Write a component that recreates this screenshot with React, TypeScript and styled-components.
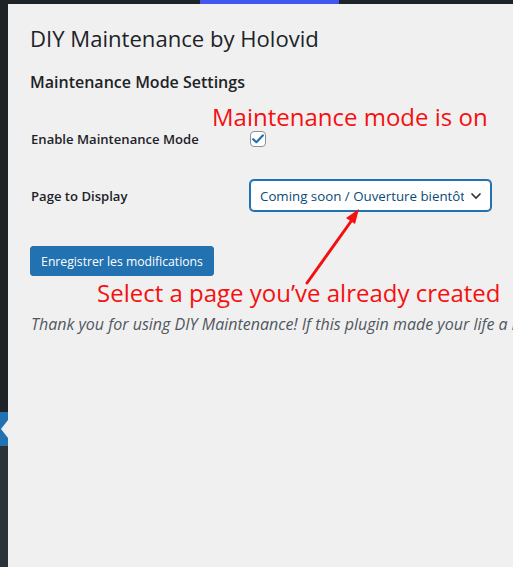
import React from "react";
import styled, { createGlobalStyle } from "styled-components";

const GlobalStyle = createGlobalStyle`
  html, body { margin: 0; padding: 0; background: #f0f0f1; overflow: hidden; }
  body { font-family: "Open Sans", "Noto Sans", sans-serif; color: #1d2327; }
  * { box-sizing: border-box; }
`;

const Page = styled.div`
  display: flex;
  width: 513px;
  height: 567px;
  overflow: hidden;
`;

const Sidebar = styled.div`
  width: 8px;
  flex: 0 0 8px;
  display: flex;
  flex-direction: column;
`;

const SideTop = styled.div`
  height: 412px;
  background: #1d2327;
`;

const SideActive = styled.div`
  height: 34px;
  background: #2271b1;
  display: flex;
  align-items: center;
  justify-content: flex-end;
`;

const Notch = styled.span`
  width: 0;
  height: 0;
  border-top: 9px solid transparent;
  border-bottom: 9px solid transparent;
  border-right: 7px solid #f0f0f1;
`;

const SideRest = styled.div`
  flex: 1;
  background: #2c3338;
`;

const Main = styled.div`
  flex: 1;
  display: flex;
  flex-direction: column;
  min-width: 0;
`;

const TopBar = styled.div`
  height: 4px;
  background: #1d2327;
  display: flex;
`;

const TopBarActive = styled.span`
  margin-left: 192px;
  width: 139px;
  background: #4058f0;
`;

const Content = styled.div`
  position: relative;
  flex: 1;
  padding: 19px 0 0 22px;
  overflow: hidden;
`;

const Title = styled.h1`
  margin: 0;
  font-size: 22.1px;
  line-height: 30px;
  font-weight: 400;
  color: #1d2327;
`;

const SectionTitle = styled.h2`
  margin: 17px 0 0;
  font-size: 16px;
  line-height: 24px;
  font-weight: 600;
  color: #1d2327;
`;

const FormTable = styled.div`
  display: flex;
  flex-direction: column;
  margin-top: 25px;
`;

const Row = styled.div<{ $h: number }>`
  display: flex;
  align-items: center;
  height: ${(p) => p.$h}px;
`;

const Label = styled.div`
  width: 220px;
  flex: 0 0 220px;
  font-size: 13.1px;
  font-weight: 600;
  color: #1d2327;
  padding-left: 1px;
`;

const Check = styled.span`
  width: 16px;
  height: 16px;
  border: 1px solid #8c8f94;
  border-radius: 4px;
  background: #fff;
  display: flex;
  align-items: center;
  justify-content: center;
`;

const Select = styled.div`
  width: 241px;
  height: 31px;
  margin-top: -1px;
  border: 1px solid #2271b1;
  box-shadow: 0 0 0 1px #2271b1;
  border-radius: 4px;
  background: #fff;
  display: flex;
  align-items: center;
  gap: 6px;
  padding: 0 8px 0 9px;
  font-size: 13.3px;
  color: #0a4b78;
  white-space: nowrap;
`;

const SelectValue = styled.span`
  flex: 1;
  overflow: hidden;
`;

const Button = styled.button`
  margin-top: 13px;
  width: 184px;
  height: 30px;
  border: 1px solid #2271b1;
  border-radius: 3px;
  background: #2271b1;
  color: #fff;
  font-family: "Open Sans", "Noto Sans", sans-serif;
  font-size: 12.2px;
  padding: 0;
  align-self: flex-start;
`;

const Footer = styled.p`
  margin: 37px 0 0 1px;
  font-size: 16px;
  line-height: 22px;
  font-style: italic;
  color: #50575e;
  white-space: nowrap;
`;

const Note = styled.div<{ $x: number; $y: number; $size: number }>`
  position: absolute;
  left: ${(p) => p.$x}px;
  top: ${(p) => p.$y}px;
  font-size: ${(p) => p.$size}px;
  line-height: 1;
  color: #f51010;
  white-space: nowrap;
`;

const Arrow = styled.svg`
  position: absolute;
  left: 0;
  top: 0;
  overflow: visible;
`;

export default function App() {
  return (
    <>
      <GlobalStyle />
      <Page>
        <Sidebar>
          <SideTop />
          <SideActive>
            <Notch />
          </SideActive>
          <SideRest />
        </Sidebar>
        <Main>
          <TopBar>
            <TopBarActive />
          </TopBar>
          <Content>
            <Title>DIY Maintenance by Holovid</Title>
            <SectionTitle>Maintenance Mode Settings</SectionTitle>
            <FormTable>
              <Row $h={40}>
                <Label>Enable Maintenance Mode</Label>
                <Check>
                  <svg width="12" height="10" viewBox="0 0 12 10">
                    <path d="M1.2 5.2 L4.4 8.2 L10.8 1.4" fill="none" stroke="#2271b1" strokeWidth="2.2" strokeLinecap="round" strokeLinejoin="round" />
                  </svg>
                </Check>
              </Row>
              <Row $h={74}>
                <Label>Page to Display</Label>
                <Select>
                  <SelectValue>Coming soon / Ouverture bientôt</SelectValue>
                  <svg width="12" height="8" viewBox="0 0 12 8">
                    <path d="M1.5 1.5 L6 6 L10.5 1.5" fill="none" stroke="#2c3338" strokeWidth="1.6" />
                  </svg>
                </Select>
              </Row>
              <Button>Enregistrer les modifications</Button>
            </FormTable>
            <Footer>Thank you for using DIY Maintenance! If this plugin made your life a little easier, please consider leaving a review.</Footer>
            <Note $x={204} $y={101} $size={24}>Maintenance mode is on</Note>
            <Note $x={89} $y={277} $size={24}>Select a page you’ve already created</Note>
            <Arrow width="1" height="1">
              <line x1="299" y1="279" x2="344" y2="216" stroke="#f51010" strokeWidth="3" strokeLinecap="round" />
              <polygon points="351,205 338,214 347,220" fill="#f51010" />
            </Arrow>
          </Content>
        </Main>
      </Page>
    </>
  );
}
